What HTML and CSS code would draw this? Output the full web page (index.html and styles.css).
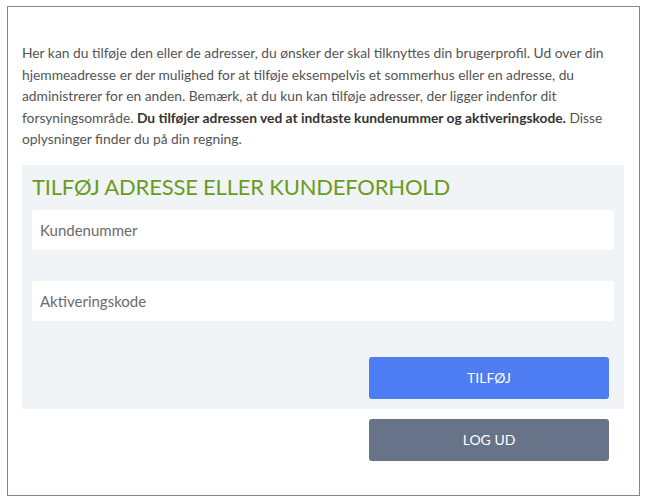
FILE: index.html
```html
<!DOCTYPE html>
<html lang="da">
    <head>
        <meta charset="UTF-8">
        <meta name="viewport" content="width=device-width, initial-scale=1.0">
        <title>Tilføj adresse</title>

        <link rel="stylesheet" href="styles.css">
    </head>
    <body>
        <div class="frame">
            <p class="intro">
                Her kan du tilføje den eller de adresser, du ønsker der skal tilknyttes din brugerprofil. Ud over din<br>
                hjemmeadresse er der mulighed for at tilføje eksempelvis et sommerhus eller en adresse, du<br>
                administrerer for en anden. Bemærk, at du kun kan tilføje adresser, der ligger indenfor dit<br>
                forsyningsområde. <strong>Du tilføjer adressen ved at indtaste kundenummer og aktiveringskode.</strong> Disse<br>
                oplysninger finder du på din regning.
            </p>

            <form class="panel">
                <h2>Tilføj adresse eller kundeforhold</h2>
                <input type="text" placeholder="Kundenummer">
                <input type="text" placeholder="Aktiveringskode">
                <div class="actions">
                    <button type="button" class="btn add">Tilføj</button>
                </div>
            </form>

            <div class="actions outside">
                <button type="button" class="btn logout">Log ud</button>
            </div>
        </div>
    </body>
</html>
```

FILE: styles.css
```css
* {
    box-sizing: border-box;
    font-family: Lato, "Open Sans", sans-serif;
}

body {
    margin: 0;
    background: white;
}

.frame {
    margin: 6px 7px;
    height: 490px;
    border: 1px solid #858585;
    padding: 35px 15px 0 14px;
}

.intro {
    margin: 0;
    font-size: 13.8px;
    line-height: 21.5px;
    color: #545454;
}
.intro strong {
    color: #333;
    font-weight: bold;
}

.panel {
    margin-top: 15px;
    background: #f0f4f7;
    padding: 7px 10px 10px;
}
.panel h2 {
    margin: 0 0 8px;
    font-size: 22px;
    line-height: 30px;
    font-weight: normal;
    letter-spacing: -0.2px;
    text-transform: uppercase;
    color: #6b9b1e;
}
.panel input {
    display: block;
    width: 100%;
    height: 40px;
    margin-bottom: 31px;
    border: none;
    border-radius: 3px;
    background: white;
    padding: 0 8px;
    font-size: 15px;
    color: #444;
}
.panel input:last-of-type {
    margin-bottom: 36px;
}
.panel input::placeholder {
    color: #6b6b6b;
}

.actions {
    display: flex;
    justify-content: flex-end;
    padding-right: 5px;
}
.actions.outside {
    margin-top: 10px;
    padding-right: 15px;
}

.btn {
    width: 240px;
    height: 42px;
    border: none;
    border-radius: 3px;
    color: white;
    font-size: 14px;
    text-transform: uppercase;
}
.btn.add {
    background: #4e7cf3;
}
.btn.logout {
    background: #677389;
}
```
